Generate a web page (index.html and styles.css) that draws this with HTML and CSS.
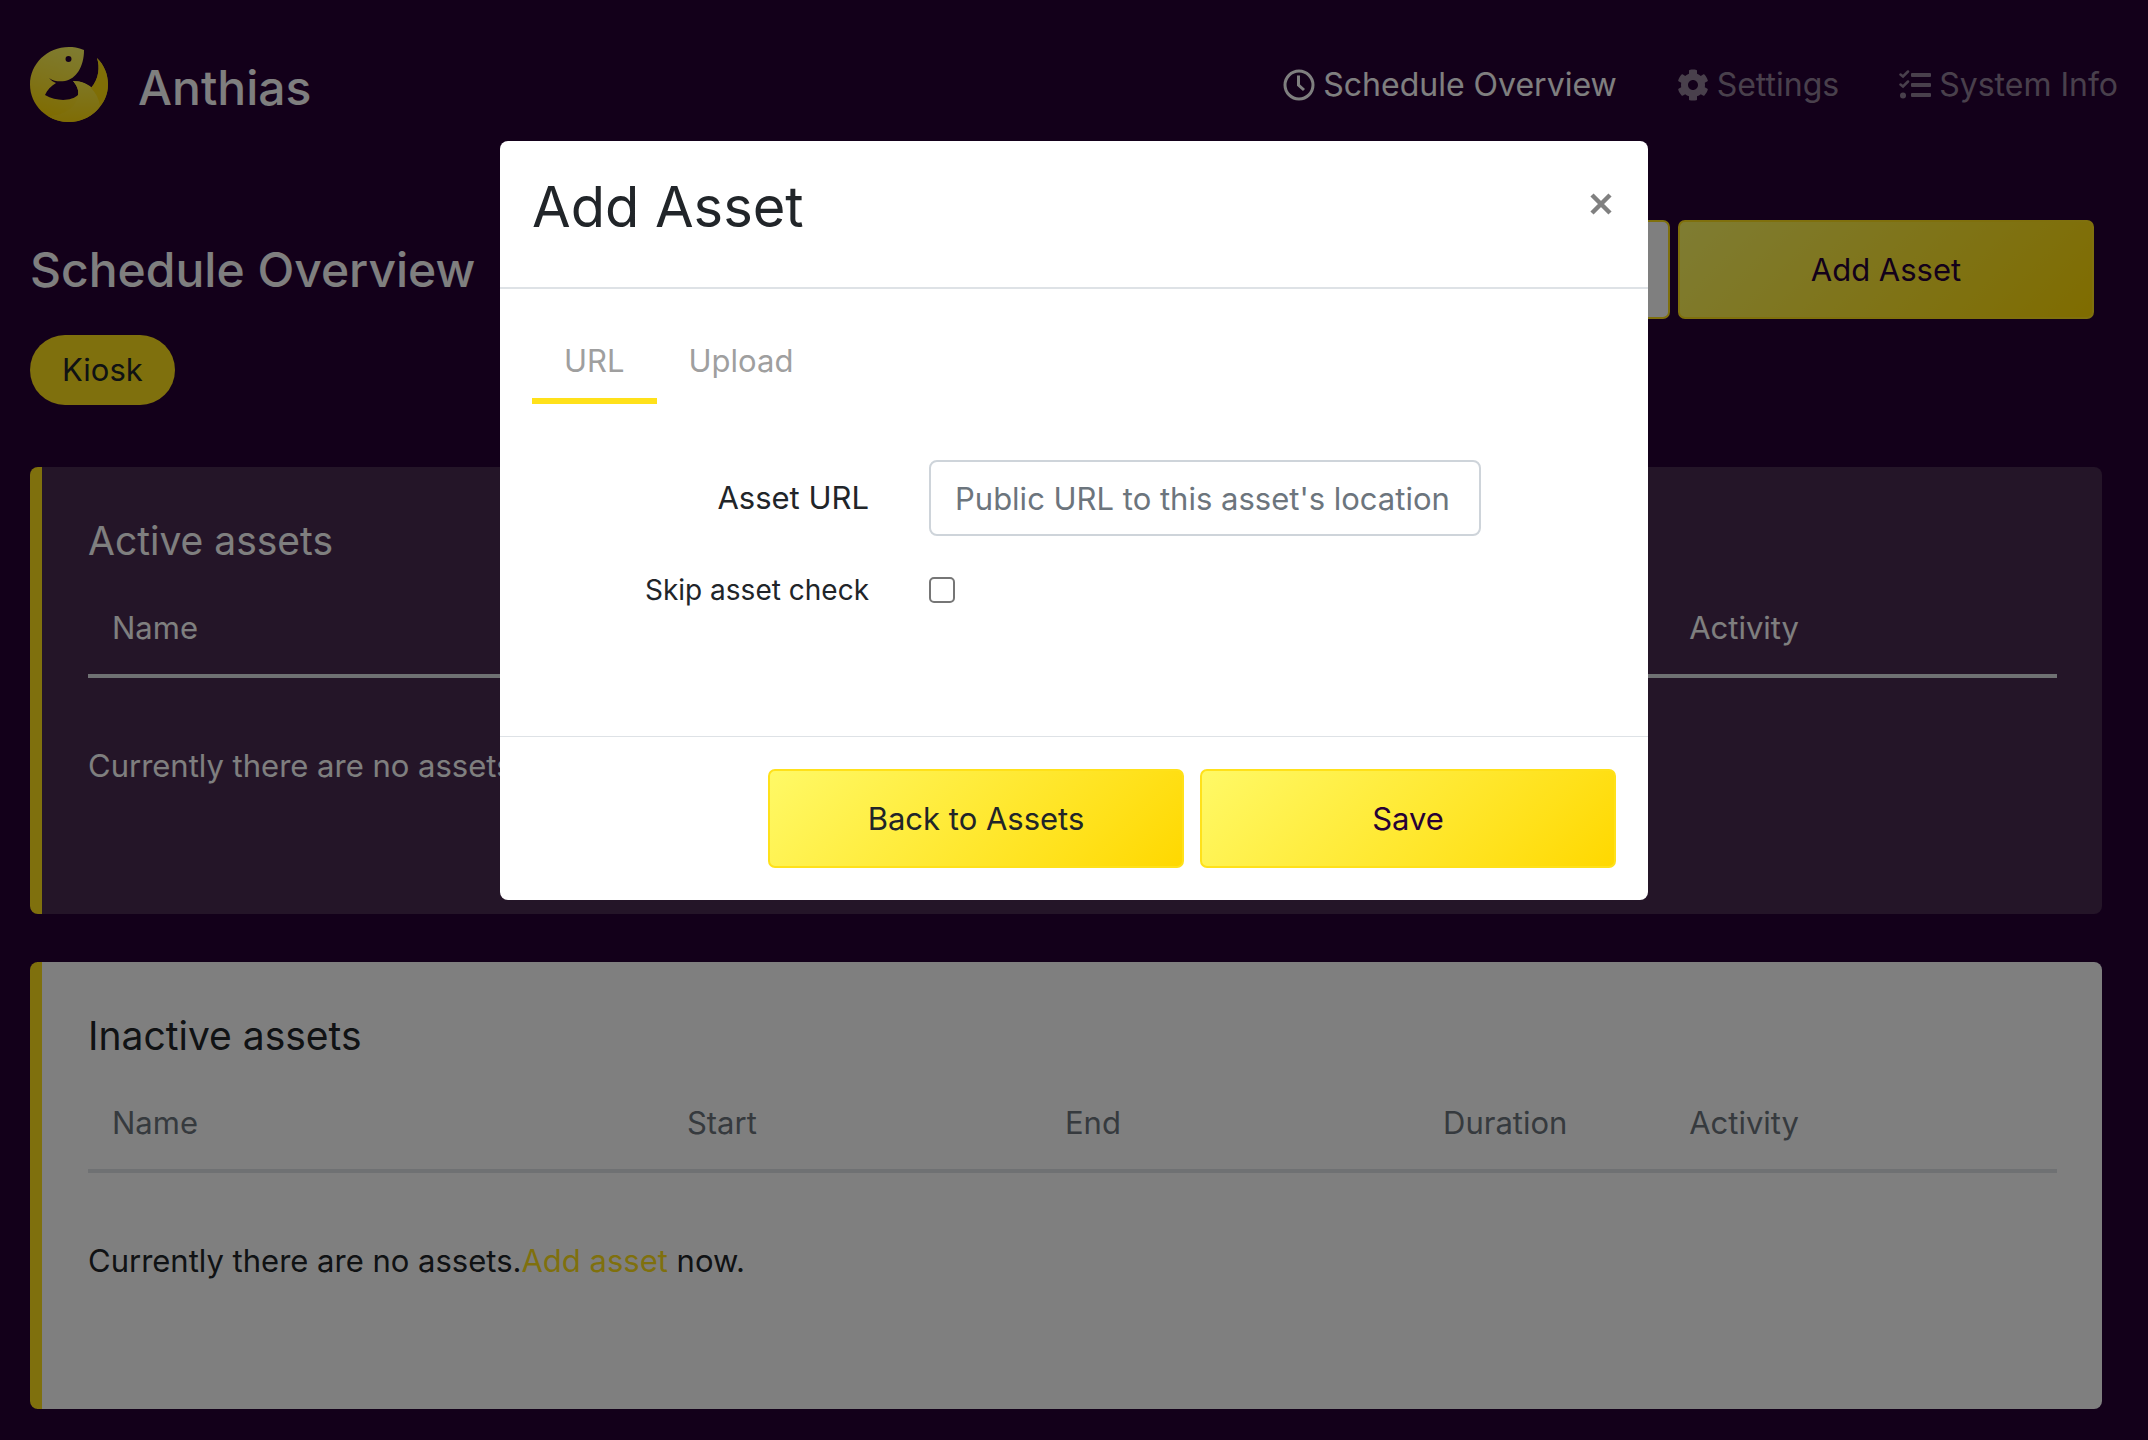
FILE: index.html
```html
<!DOCTYPE html>
<html lang="en">
<head>
<meta charset="utf-8">
<title>Anthias</title>
<link rel="stylesheet" href="styles.css">
</head>
<body>
<div class="page">
  <header class="topbar">
    <a class="brand" href="#">
      <svg class="brand-mark" viewBox="0 0 78 75" aria-hidden="true">
        <defs>
          <linearGradient id="body-fill" x1="0.7" y1="0" x2="0.4" y2="1"><stop offset="0" stop-color="#fff966"/><stop offset="0.6" stop-color="#ffe52e"/><stop offset="1" stop-color="#ffd800"/></linearGradient>
          <linearGradient id="tail-fill" x1="0.5" y1="0" x2="0.5" y2="1"><stop offset="0" stop-color="#fff04a"/><stop offset="1" stop-color="#ffd90a"/></linearGradient>
        </defs>
        <path fill="url(#body-fill)" fill-rule="evenodd" d="M54 3C48 0.500 43 0 39 0C17 0 0 17 0 37.500C0 58 17 75 39 75C60 75 78 58 78 37.500C78 27 74 18 67 11C70 20 69 32 61 41C57 37 51 34 43 34C47 39 49 43 48 48C42 54 27 55 15 48C17 43 21 39 26 36C23 35 21 33 19 31C25 35 30 34.500 35 34C46 32 54 20 54 3ZM38.500 9A3 3 0 1 1 38.500 15A3 3 0 1 1 38.500 9Z"/>
        <path fill="url(#tail-fill)" d="M43 34C61 34 70 47 70 59C64 69 51 75 39 75C31 75 24 73 18 69C34 69 47 60 48 48C49 43 47 39 43 34Z"/>
        <path fill="#ffd800" opacity="0.8" d="M67 11C74 18 78 27 78 37.500C78 46 75 54 70 59C69 52 66 46 61 41C69 32 70 20 67 11Z"/>
      </svg>
      <span class="brand-name">Anthias</span>
    </a>
    <nav class="nav">
      <a class="nav-link nav-link-active" href="#">
        <svg class="icon" viewBox="0 0 32 32" aria-hidden="true"><circle cx="16" cy="16" r="14" fill="none" stroke="currentColor" stroke-width="3"/><path d="M15.500 6.500v9.500l5.500 5" fill="none" stroke="currentColor" stroke-width="3"/></svg>Schedule Overview</a>
      <a class="nav-link" href="#">
        <svg class="icon" viewBox="0 0 512 512" aria-hidden="true"><path fill="currentColor" d="M487.400 315.700l-42.600-24.600c4.300-23.200 4.300-47 0-70.200l42.600-24.600c4.900-2.800 7.100-8.600 5.500-14-11.100-35.600-30-67.800-54.700-94.600-3.800-4.100-10-5.100-14.800-2.300L380.800 110c-17.900-15.400-38.500-27.300-60.800-35.100V25.800c0-5.600-3.900-10.500-9.400-11.700-36.700-8.200-74.300-7.800-109.200 0-5.500 1.200-9.400 6.100-9.400 11.700V75c-22.200 7.900-42.800 19.800-60.800 35.100L88.700 85.500c-4.900-2.800-11-1.900-14.800 2.300-24.700 26.700-43.600 58.900-54.700 94.600-1.700 5.400.6 11.200 5.500 14L67.300 221c-4.300 23.200-4.300 47 0 70.200l-42.600 24.600c-4.900 2.800-7.100 8.600-5.500 14 11.100 35.600 30 67.800 54.700 94.600 3.800 4.100 10 5.100 14.800 2.300l42.600-24.600c17.900 15.400 38.500 27.300 60.800 35.100v49.200c0 5.600 3.900 10.500 9.400 11.700 36.700 8.200 74.300 7.800 109.200 0 5.500-1.200 9.400-6.100 9.400-11.700v-49.200c22.200-7.900 42.800-19.800 60.800-35.100l42.600 24.600c4.900 2.800 11 1.900 14.800-2.300 24.700-26.700 43.600-58.900 54.700-94.600 1.500-5.500-.7-11.300-5.600-14.100zM256 336c-44.100 0-80-35.900-80-80s35.900-80 80-80 80 35.900 80 80-35.900 80-80 80z"/></svg>Settings</a>
      <a class="nav-link" href="#">
        <svg class="icon" viewBox="0 0 32 32" aria-hidden="true"><g fill="none" stroke="currentColor" stroke-width="2.500" stroke-linecap="round"><path d="M1.500 5.500l2.500 2 5-5M1.500 15.500l2.500 2 5-5"/></g><circle cx="4" cy="26.500" r="3" fill="currentColor"/><g fill="currentColor"><rect x="12" y="4" width="20" height="4" rx="1"/><rect x="12" y="14" width="20" height="4" rx="1"/><rect x="12" y="24" width="20" height="4" rx="1"/></g></svg>System Info</a>
    </nav>
  </header>

  <section class="heading">
    <h1 class="heading-title">Schedule Overview</h1>
    <div class="heading-actions">
      <button class="btn btn-plain" type="button" aria-label="Next asset"></button>
      <button class="btn btn-dark-text" type="button">Add Asset</button>
    </div>
  </section>
  <span class="badge">Kiosk</span>

  <section class="panel panel-active">
    <h2 class="panel-title">Active assets</h2>
    <table class="assets">
      <thead><tr><th class="col-name">Name</th><th class="col-date">Start</th><th class="col-date">End</th><th class="col-duration">Duration</th><th class="col-activity">Activity</th><th class="col-tools"></th></tr></thead>
    </table>
    <p class="panel-empty">Currently there are no assets.</p>
  </section>

  <section class="panel panel-inactive">
    <h2 class="panel-title">Inactive assets</h2>
    <table class="assets">
      <thead><tr><th class="col-name">Name</th><th class="col-date">Start</th><th class="col-date">End</th><th class="col-duration">Duration</th><th class="col-activity">Activity</th><th class="col-tools"></th></tr></thead>
    </table>
    <p class="panel-empty">Currently there are no assets.<a class="panel-link" href="#">Add asset</a> now.</p>
  </section>
</div>

<div class="backdrop">
  <form class="modal" role="dialog" aria-labelledby="modal-title">
    <div class="modal-header">
      <h2 class="modal-title" id="modal-title">Add Asset</h2>
      <button class="modal-close" type="button" aria-label="Close"><svg class="modal-close-icon" viewBox="0 0 22 22" aria-hidden="true"><path d="M2 2l18 18M20 2L2 20" stroke="currentColor" stroke-width="4.500"/></svg></button>
    </div>
    <div class="modal-body">
      <div class="tabs">
        <a class="tab tab-active" href="#url">URL</a>
        <a class="tab" href="#upload">Upload</a>
      </div>
      <div class="field">
        <label class="field-label" for="asset-url">Asset URL</label>
        <input class="field-input" id="asset-url" type="text" placeholder="Public URL to this asset's location">
      </div>
      <div class="field">
        <label class="field-label field-label-small" for="skip-check">Skip asset check</label>
        <input class="field-check" id="skip-check" type="checkbox">
      </div>
    </div>
    <div class="modal-footer">
      <button class="btn" type="button">Back to Assets</button>
      <button class="btn btn-dark-text" type="submit">Save</button>
    </div>
  </form>
</div>
</body>
</html>
```
FILE: styles.css
```css
* {
  box-sizing: border-box;
}

body {
  margin: 0;
  background: #270035;
  color: #212529;
  font-family: Inter, "Liberation Sans", sans-serif;
  font-size: 31px;
  line-height: 48px;
}

h1,
h2,
p {
  margin: 0;
  font-weight: 400;
}

a {
  text-decoration: none;
}

.page {
  padding: 0 30px 28px;
}

.topbar {
  display: flex;
  justify-content: space-between;
  align-items: center;
  height: 169px;
}

.brand {
  display: flex;
  align-items: flex-end;
  gap: 30px;
}

.brand-mark {
  width: 78px;
  height: 75px;
}

.brand-name {
  color: #fff;
  font-size: 48px;
  font-weight: 500;
  line-height: 68px;
}

.nav {
  display: flex;
  gap: 60px;
}

.nav-link {
  display: flex;
  align-items: center;
  gap: 8px;
  color: #938099;
  font-size: 32px;
}

.nav-link-active {
  color: #fff;
}

.icon {
  width: 32px;
  height: 32px;
}

.heading {
  display: flex;
  justify-content: space-between;
  align-items: center;
  padding: 51px 24px 0 0;
}

.heading-title {
  color: #fff;
  font-size: 48px;
  font-weight: 500;
}

.heading-actions {
  display: flex;
  gap: 8px;
}

.btn {
  width: 416px;
  height: 99px;
  border: 2px solid #ffe11a;
  border-radius: 7px;
  background: linear-gradient(135deg, #fff966 0%, #ffe11a 75%, #ffd800 100%);
  color: #212529;
  font: inherit;
}

.btn-dark-text {
  color: #270035;
}

.btn-plain {
  background: #fff;
}

.badge {
  display: inline-block;
  margin-top: 16px;
  padding: 11px 32px;
  border-radius: 35px;
  background: #ffe11a;
}

.panel {
  margin: 62px 16px 0 0;
  min-height: 447px;
  padding: 50px 45px 48px 46px;
  border-left: 12px solid #ffe11a;
  border-radius: 8px;
}

.panel + .panel {
  margin-top: 48px;
}

.panel-active {
  background: #482a50;
  color: #fff;
}

.panel-inactive {
  background: #fff;
}

.panel-title {
  font-size: 39px;
}

.assets {
  width: 100%;
  margin-top: 15px;
  border-collapse: collapse;
  table-layout: fixed;
}

.assets th {
  padding: 24px 24px 22px;
  border-bottom: 4px solid #dee2e6;
  font-weight: 400;
  text-align: left;
}

.panel-inactive th {
  color: #6c757d;
}

.assets .col-name {
  width: 29.2%;
}

.assets .col-date {
  width: 19.2%;
}

.assets .col-duration {
  width: 12.5%;
}

.assets .col-activity {
  width: 8.1%;
  padding-right: 0;
}

.panel-empty {
  margin-top: 64px;
}

.panel-link {
  color: #ffe11a;
}

.backdrop {
  position: fixed;
  inset: 0;
  padding-top: 141px;
  background: rgba(0, 0, 0, 0.5);
}

.modal {
  width: 1148px;
  margin: 0 auto;
  border-radius: 8px;
  background: #fff;
}

.modal-header {
  display: flex;
  justify-content: space-between;
  align-items: flex-start;
  padding: 30px 32px 44px;
  border-bottom: 2px solid #dee2e6;
}

.modal-title {
  font-size: 56px;
  line-height: 72px;
}

.modal-close {
  padding: 22px 4px;
  border: 0;
  background: none;
  color: #808080;
}

.modal-close-icon {
  display: block;
  width: 22px;
  height: 22px;
}

.modal-body {
  padding: 32px 32px 92px;
}

.tabs {
  display: flex;
  margin-bottom: 56px;
}

.tab {
  padding: 16px 32px 13px;
  border-bottom: 6px solid transparent;
  color: #9f9f9f;
}

.tab-active {
  border-color: #ffe11a;
}

.field {
  display: grid;
  grid-template-columns: 337px 552px;
  gap: 60px;
  align-items: center;
  margin-bottom: 30px;
}

.field-label {
  text-align: right;
}

.field-label-small {
  font-size: 28px;
}

.field-input {
  height: 76px;
  padding: 0 24px;
  border: 2px solid #ced4da;
  border-radius: 8px;
  font: inherit;
}

.field-input::placeholder {
  color: #6c757d;
}

.field-check {
  appearance: none;
  width: 26px;
  height: 26px;
  margin: 0;
  border: 2px solid #767676;
  border-radius: 5px;
  background: #fff;
}

.field-check:checked {
  background: #ffe11a;
}

.modal-footer {
  display: flex;
  justify-content: flex-end;
  gap: 16px;
  padding: 32px;
  border-top: 1px solid #dee2e6;
}
```
